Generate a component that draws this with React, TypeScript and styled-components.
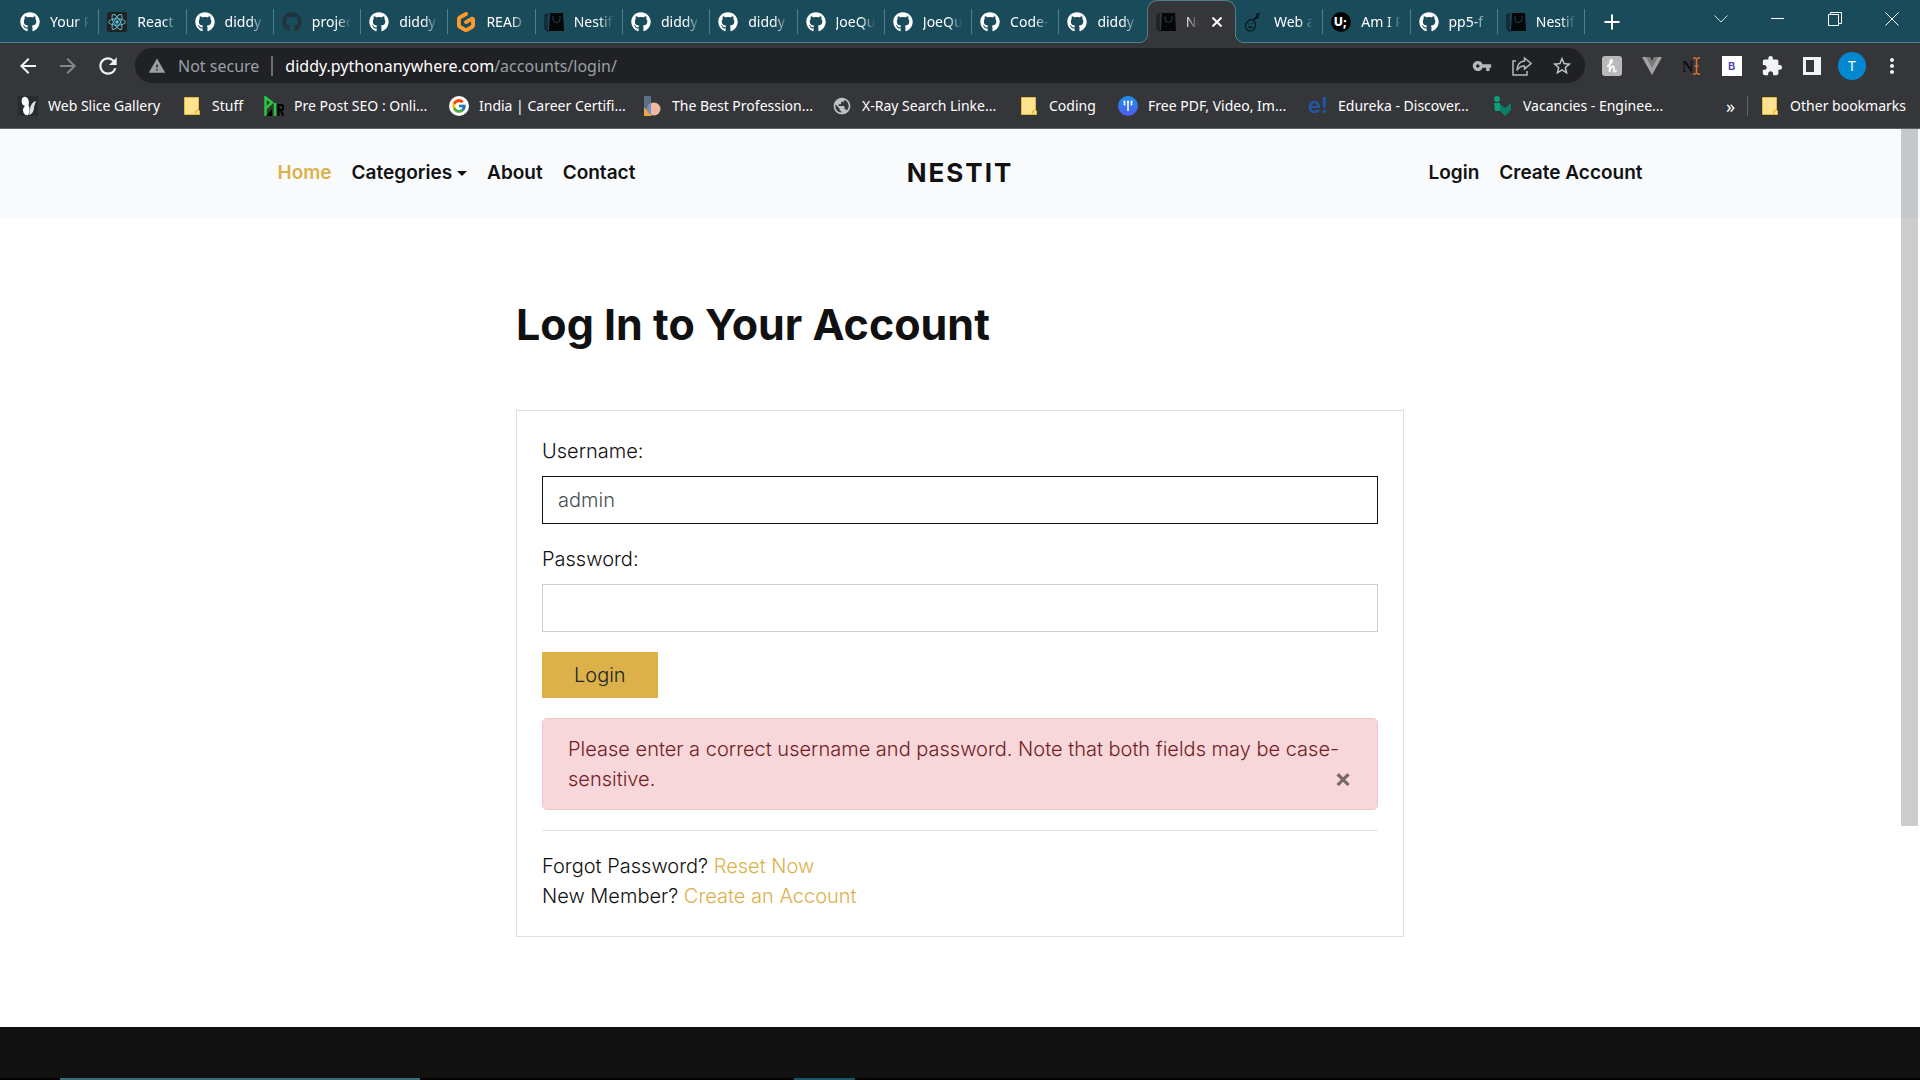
import React from 'react';
import styled, { createGlobalStyle, css } from 'styled-components';
import { FaGithub } from 'react-icons/fa';
import { FcGoogle } from 'react-icons/fc';
import { SiGitpod } from 'react-icons/si';
import {
  MdArrowBack,
  MdArrowForward,
  MdExtension,
  MdMoreVert,
  MdPublic,
  MdRefresh,
  MdStarBorder,
  MdVpnKey,
  MdWarning,
} from 'react-icons/md';

const color = {
  strip: '#1a4b5b',
  stripLine: '#4f7f8c',
  toolbar: '#35363a',
  omnibox: '#202124',
  muted: '#9aa0a6',
  gold: '#dcb14a',
  ink: '#111111',
};

const uiFont = '"Noto Sans", "Open Sans", sans-serif';
const siteFont = 'Inter, "Liberation Sans", sans-serif';

const GlobalStyle = createGlobalStyle`
  *, *::before, *::after { box-sizing: border-box; }
  body { margin: 0; background: #fff; }
  button { border: 0; padding: 0; background: none; color: inherit; font: inherit; cursor: pointer; }
  a { text-decoration: none; color: inherit; }
  svg { display: block; flex: none; }
`;

const Screen = styled.div`
  display: flex;
  flex-direction: column;
  min-height: 100vh;
`;

/* ---------- browser window ---------- */

const TabStrip = styled.div`
  display: flex;
  height: 43px;
  padding-left: 12px;
  background: linear-gradient(${color.stripLine}, ${color.stripLine}) bottom / 100% 1px no-repeat ${color.strip};
  color: #fff;
  font: 14px/20px ${uiFont};
`;

const TabList = styled.div`
  display: flex;
  flex: 0 1 1573px;
  min-width: 0;
`;

const activeTab = css`
  background: ${color.toolbar};
  border: 1px solid ${color.stripLine};
  border-bottom: 0;
  border-radius: 10px 10px 0 0;
  &::before,
  &::after {
    content: '';
    position: absolute;
    bottom: 0;
    width: 9px;
    height: 9px;
  }
  &::before {
    left: -9px;
    background: radial-gradient(circle at 0 0, transparent 8px, ${color.stripLine} 8px, ${color.stripLine} 9px, ${color.toolbar} 9px);
  }
  &::after {
    right: -9px;
    background: radial-gradient(circle at 100% 0, transparent 8px, ${color.stripLine} 8px, ${color.stripLine} 9px, ${color.toolbar} 9px);
  }
`;

const idleTab = css<{ $divided: boolean }>`
  background: linear-gradient(${color.stripLine}, ${color.stripLine}) right center / ${p => (p.$divided ? 1 : 0)}px 25px no-repeat;
`;

const Tab = styled.div<{ $active: boolean; $divided: boolean }>`
  position: relative;
  display: flex;
  flex: 1 1 0;
  align-items: center;
  gap: 10px;
  min-width: 0;
  padding: 0 10px 0 8px;
  ${p => (p.$active ? activeTab : idleTab)}
`;

const TabTitle = styled.span`
  flex: 1;
  min-width: 0;
  overflow: hidden;
  white-space: nowrap;
  mask-image: linear-gradient(to left, transparent, #000 14px);
`;

const TabClose = styled.button`
  display: grid;
  place-items: center;
  width: 16px;
  height: 20px;
`;

const NewTab = styled.button`
  display: grid;
  place-items: center;
  width: 54px;
`;

const WindowControls = styled.div`
  display: flex;
  height: 38px;
  margin-left: auto;
`;

const WindowButton = styled.button`
  display: grid;
  place-items: center;
  width: 57px;
`;

const Toolbar = styled.div`
  display: flex;
  align-items: center;
  height: 45px;
  padding: 0 8px;
  background: ${color.toolbar};
  color: #f1f3f4;
`;

const ToolButton = styled.button<{ $dim?: boolean }>`
  display: grid;
  place-items: center;
  width: 40px;
  height: 35px;
  color: ${p => (p.$dim ? '#85868a' : 'inherit')};
`;

const Omnibox = styled.div`
  display: flex;
  flex: 1;
  align-items: center;
  height: 35px;
  margin: 0 7px;
  padding: 0 3px 0 13px;
  border-radius: 18px;
  background: ${color.omnibox};
  color: ${color.muted};
  font: 16px/24px ${uiFont};
  white-space: nowrap;
`;

const Security = styled.button`
  display: flex;
  align-items: center;
  gap: 12px;
`;

const OmniDivider = styled.span`
  width: 2px;
  height: 20px;
  margin: 0 12px;
  background: #6d6f73;
`;

const Url = styled.span`
  flex: 1;
`;

const Host = styled.span`
  color: #fff;
`;

const Avatar = styled.span`
  display: grid;
  place-items: center;
  width: 28px;
  height: 28px;
  border-radius: 50%;
  background: #0288d1;
  color: #fff;
  font: 14px/28px ${uiFont};
`;

const BookmarksBar = styled.nav`
  display: flex;
  align-items: center;
  height: 41px;
  padding: 0 14px 4px 18px;
  border-bottom: 1px solid #5f6064;
  background: ${color.toolbar};
  color: #fff;
  font: 14px/20px ${uiFont};
  white-space: nowrap;
`;

const Bookmark = styled.a<{ $width?: number }>`
  display: flex;
  align-items: center;
  gap: 10px;
  ${p => p.$width && `width: ${p.$width}px;`}
`;

const MoreBookmarks = styled.button`
  margin-left: auto;
  padding-right: 12px;
  font-size: 18px;
`;

const BarDivider = styled.span`
  width: 1px;
  height: 20px;
  margin-right: 12px;
  background: #63656a;
`;

/* ---------- web page ---------- */

const Viewport = styled.div`
  position: relative;
  display: flex;
  flex: 1;
  flex-direction: column;
  color: ${color.ink};
  font: 300 20px/30px ${siteFont};
`;

const ScrollThumb = styled.div`
  position: absolute;
  top: 0;
  right: 2px;
  width: 17px;
  height: 697px;
  background: rgba(0, 0, 0, 0.2);
`;

const SiteHeader = styled.header`
  padding: 29px 0 30px;
  background: #f8fafc;
`;

const HeaderInner = styled.div`
  display: grid;
  grid-template-columns: 1fr auto 1fr;
  align-items: center;
  max-width: 1425px;
  margin: 0 auto;
  padding: 0 30px;
`;

const NavGroup = styled.nav<{ $end?: boolean }>`
  display: flex;
  gap: 20px;
  justify-content: ${p => (p.$end ? 'flex-end' : 'flex-start')};
`;

const NavLink = styled.a<{ $current?: boolean; $caret?: boolean }>`
  display: flex;
  align-items: center;
  gap: 5px;
  color: ${p => (p.$current ? color.gold : color.ink)};
  font-size: 19px;
  font-weight: 600;
  ${p =>
    p.$caret &&
    css`
      &::after {
        content: '';
        border: 5px solid transparent;
        border-top-color: currentColor;
        border-bottom: 0;
      }
    `}
`;

const Brand = styled.a`
  font-size: 26px;
  font-weight: 700;
  letter-spacing: 2px;
`;

const Main = styled.main`
  width: 100%;
  max-width: 888px;
  margin: 0 auto;
  padding: 77px 0 90px;
`;

const Title = styled.h1`
  margin: 0 0 57px;
  font-size: 43px;
  font-weight: 700;
  line-height: 58px;
`;

const Card = styled.section`
  padding: 25px;
  border: 1px solid #dfdfdf;
`;

const LoginForm = styled.form`
  display: flex;
  flex-direction: column;
  align-items: stretch;
  gap: 20px;
`;

const Field = styled.div`
  display: flex;
  flex-direction: column;
  gap: 10px;
`;

const TextInput = styled.input<{ $focused?: boolean }>`
  width: 100%;
  height: 48px;
  padding: 0 15px;
  border: 1px solid ${p => (p.$focused ? color.ink : '#ced0d8')};
  border-radius: 0;
  outline: none;
  background: #fff;
  color: #495057;
  font: inherit;
`;

const SubmitButton = styled.button`
  align-self: flex-start;
  height: 46px;
  padding: 0 32px;
  background: ${color.gold};
  color: #212529;
`;

const Alert = styled.div`
  padding: 15px 25px;
  border: 1px solid #f5c6cb;
  border-radius: 5px;
  background: #f7d7da;
  color: #721c24;
`;

const AlertClose = styled.button`
  float: right;
  height: 30px;
  color: #000;
  font-size: 26px;
  font-weight: 700;
  line-height: 28px;
  opacity: 0.5;
  text-shadow: 0 1px 0 #fff;
`;

const Rule = styled.hr`
  margin: 20px 0;
  border: 0;
  border-top: 1px solid #e3e3e3;
`;

const HelpLine = styled.p`
  margin: 0;
`;

const GoldLink = styled.a`
  color: ${color.gold};
`;

const SiteFooter = styled.footer`
  flex: 1;
  min-height: 51px;
  background: ${color.ink};
`;

const Taskbar = styled.div`
  display: flex;
  gap: 374px;
  height: 2px;
  padding-left: 60px;
  background: #000;
`;

const TaskItem = styled.span<{ $wide?: boolean }>`
  width: ${p => (p.$wide ? 360 : 61)}px;
  background: ${p => (p.$wide ? '#3d6c7a' : '#1b5568')};
`;

/* ---------- drawings ---------- */

const GitHub = () => <FaGithub size={20} />;
const DarkGitHub = () => <FaGithub size={20} color="#24323a" />;
const Gitpod = () => <SiGitpod size={20} color="#ff9a2e" />;

const ReactMark = () => (
  <svg width="20" height="20" viewBox="0 0 20 20">
    <rect width="20" height="20" rx="2" fill="#222" />
    <g fill="none" stroke="#5fc9e3" strokeWidth="0.9">
      <ellipse cx="10" cy="10" rx="8.4" ry="3.2" />
      <ellipse cx="10" cy="10" rx="8.4" ry="3.2" transform="rotate(60 10 10)" />
      <ellipse cx="10" cy="10" rx="8.4" ry="3.2" transform="rotate(120 10 10)" />
    </g>
    <circle cx="10" cy="10" r="1.7" fill="#5fc9e3" />
  </svg>
);

const Bag = () => (
  <svg width="20" height="20" viewBox="0 0 20 20">
    <path d="M6 1h13l1 18H5z" fill="#050607" />
    <path d="M4.500 1.500 1 3v14l2 2h2M3 3v15" fill="none" stroke="#0b1418" strokeWidth="1" />
    <path d="M9 4v3a3.500 3.500 0 0 0 7 0V4" fill="none" stroke="#22404b" strokeWidth="1" />
  </svg>
);

const Doodle = () => (
  <svg width="20" height="20" viewBox="0 0 20 20" fill="none" stroke="#06141a" strokeWidth="1.2">
    <path d="M9.500 8C6 6.500 1.500 10 1.500 14c0 3 2 5 4.500 5 3.500 0 5.500-3 5.500-6 0-2-.5-3.500-2-5zM9.500 8 16 1M12.500 1l1 4M11 7l4-2" />
    <path d="M4.500 14.500c.5 1.500 2.500 1.500 4 0M4.500 12h1M8 11.500h1" />
  </svg>
);

const UMark = () => (
  <svg width="20" height="20" viewBox="0 0 20 20">
    <circle cx="10" cy="10" r="10" fill="#000" />
    <text x="3" y="14" fill="#fff" fontFamily="Inter, sans-serif" fontSize="12" fontWeight="800">U;</text>
  </svg>
);

const WebSlice = () => (
  <svg width="20" height="20" viewBox="0 0 20 20">
    <rect width="20" height="20" fill="#292c2f" />
    <path d="M4 3c1-3 5-3 6.500 1 .5 2 .5 4 0 5 1.500 3 1.500 8-.5 10-2 1-5-1-5-5 0-2 1-3 2-4C4 9 3 6 4 3z" fill="#fff" />
    <path d="M18 5c-4 1-6 5-6 9l-1 5c4-1 5-5 5-8z" fill="#dfe1e3" />
  </svg>
);

const Folder = () => (
  <svg width="20" height="20" viewBox="0 0 20 20">
    <path d="M2.500 1.500h14V14l1 1v3.500h-15z" fill="#ffe38f" stroke="#e2b93f" />
    <path d="M13.500 18.500V15l1.500-1h1.500" fill="#f4c84e" stroke="#e2b93f" />
  </svg>
);

const PrePost = () => (
  <svg width="20" height="20" viewBox="0 0 20 20" fill="none">
    <path d="M1.500 20V1.500L8 6.500 1.500 12.500" stroke="#28c840" strokeWidth="2.500" />
    <path d="M2 20l6-7v7" fill="#000" />
    <path d="M11 7v13" stroke="#28c840" strokeWidth="2.500" />
    <path d="M14.500 20V9H17a2.500 2.500 0 0 1 0 5h-2M17 14l2 6" stroke="#000" strokeWidth="2" />
  </svg>
);

const Google = () => (
  <svg width="20" height="20" viewBox="0 0 20 20">
    <circle cx="10" cy="10" r="10" fill="#fff" />
    <FcGoogle x="2" y="2" width="16" height="16" size={16} />
  </svg>
);

const BestProfession = () => (
  <svg width="20" height="20" viewBox="0 0 20 20">
    <path d="M2 0h7v20H2z" fill="#5b7086" />
    <path d="M2 11l8 9H2z" fill="#f2a541" />
    <circle cx="12" cy="13" r="6.500" fill="#efb8a2" />
    <path d="M9 7.200a6.500 6.500 0 0 0 0 11.600z" fill="#6f94c4" />
  </svg>
);

const PdfMark = () => (
  <svg width="20" height="20" viewBox="0 0 20 20">
    <defs>
      <linearGradient id="pdf" x1="0" y1="0" x2="0" y2="1">
        <stop offset="0" stopColor="#1f8fe8" />
        <stop offset="1" stopColor="#4d5cf0" />
      </linearGradient>
    </defs>
    <circle cx="10" cy="10" r="10" fill="url(#pdf)" />
    <path d="M6.500 5.500v4M10 5.500V15M13.500 5.500v4M5.500 5.500h2M9 5.500h2M12.500 5.500h2" stroke="#fff" strokeWidth="1.500" />
  </svg>
);

const Edureka = () => (
  <svg width="20" height="20" viewBox="0 0 20 20">
    <text x="0" y="17" fill="#1f57a4" fontFamily="Inter, sans-serif" fontSize="22" fontWeight="600">e!</text>
  </svg>
);

const Vacancies = () => (
  <svg width="20" height="20" viewBox="0 0 20 20">
    <circle cx="4" cy="3" r="3" fill="#0f9d7a" />
    <path d="M1 7h6v8H2z" fill="#0f9d7a" />
    <path d="M7 8l5 4 6-5v7l-6 6-5-5z" fill="#0a7d62" />
  </svg>
);

const Chevron = () => (
  <svg width="14" height="14" viewBox="0 0 14 14" fill="none" stroke="#cfe0e5"><path d="M.5 3.500 7 10l6.500-6.500" /></svg>
);
const Minimize = () => (
  <svg width="14" height="14" viewBox="0 0 14 14" stroke="#fff"><path d="M0 6.500h13" /></svg>
);
const Restore = () => (
  <svg width="14" height="14" viewBox="0 0 14 14" fill="none" stroke="#fff"><path d="M.5 2.500h10v11H.5zM2.500 2.500v-2h11v11h-3" /></svg>
);
const CloseWindow = () => (
  <svg width="14" height="14" viewBox="0 0 14 14" stroke="#fff"><path d="M.5.5l13 13M13.500.5l-13 13" /></svg>
);
const CloseSmall = () => (
  <svg width="10" height="10" viewBox="0 0 10 10" stroke="#fff" strokeWidth="2"><path d="M.5.5l9 9M9.500.5l-9 9" /></svg>
);
const Plus = () => (
  <svg width="16" height="16" viewBox="0 0 16 16" stroke="#fff" strokeWidth="2"><path d="M8 .5v15M.5 8h15" /></svg>
);

const Share = () => (
  <svg width="20" height="20" viewBox="0 0 20 20" fill="none" stroke="#b4b7bb" strokeWidth="1.500">
    <path d="M4 5H1v14h14v-4" />
    <path d="M12.500 2l6.500 5.500-6.500 5.500v-3C9 10 6.500 11.500 5 14.500 5 9 8 5.500 12.500 5z" />
  </svg>
);
const Honey = () => (
  <svg width="20" height="20" viewBox="0 0 20 20">
    <rect width="20" height="20" rx="3" fill="#b9b9b9" />
    <path d="M5 10c4-1 6-5 4.500-6.200C8 3 7.500 8 7.500 16c.5-4 2.500-6 4-5.500 1.500.7-.5 5.500 1 5.500 1 0 1.500-1 2-2" fill="none" stroke="#fff" strokeWidth="1.600" />
  </svg>
);
const Vue = () => (
  <svg width="20" height="18" viewBox="0 0 20 18">
    <path d="M0 0h5l5 9 5-9h5L10 18z" fill="#a3a3a3" />
    <path d="M4 0h4l2 4 2-4h4l-6 11z" fill="#7c7c7c" />
  </svg>
);
const NameTool = () => (
  <svg width="20" height="20" viewBox="0 0 20 20">
    <text x="0" y="16" fill="#111" fontFamily="Liberation Serif, serif" fontSize="16" fontWeight="700">N</text>
    <path d="M11 2h2l1.500 1L16 2h2M14.500 3v14M11 18h2l1.500-1 1.500 1h2M12.500 10h4" fill="none" stroke="#e0702a" strokeWidth="1.500" />
  </svg>
);
const BMark = () => (
  <svg width="20" height="20" viewBox="0 0 20 20">
    <rect width="20" height="20" fill="#fff" />
    <text x="6" y="14" fill="#4540b5" fontFamily="Inter, sans-serif" fontSize="11" fontWeight="600">B</text>
  </svg>
);
const SidePanel = () => (
  <svg width="18" height="18" viewBox="0 0 18 18">
    <path d="M0 0h18v18H0zM3 3v12h8V3z" fill="#f1f3f4" fillRule="evenodd" />
  </svg>
);

const tabs: { title: string; Icon: React.ComponentType; active?: boolean }[] = [
  { title: 'Your R', Icon: GitHub },
  { title: 'React', Icon: ReactMark },
  { title: 'diddy', Icon: GitHub },
  { title: 'projec', Icon: DarkGitHub },
  { title: 'diddy', Icon: GitHub },
  { title: 'READ', Icon: Gitpod },
  { title: 'Nestif', Icon: Bag },
  { title: 'diddy', Icon: GitHub },
  { title: 'diddy', Icon: GitHub },
  { title: 'JoeQu', Icon: GitHub },
  { title: 'JoeQu', Icon: GitHub },
  { title: 'Code-', Icon: GitHub },
  { title: 'diddy', Icon: GitHub },
  { title: 'Ne', Icon: Bag, active: true },
  { title: 'Web a', Icon: Doodle },
  { title: 'Am I R', Icon: UMark },
  { title: 'pp5-f', Icon: GitHub },
  { title: 'Nestif', Icon: Bag },
];

const bookmarks: { title: string; Icon: React.ComponentType; width: number }[] = [
  { title: 'Web Slice Gallery', Icon: WebSlice, width: 164 },
  { title: 'Stuff', Icon: Folder, width: 82 },
  { title: 'Pre Post SEO : Onli...', Icon: PrePost, width: 185 },
  { title: 'India | Career Certifi...', Icon: Google, width: 193 },
  { title: 'The Best Profession...', Icon: BestProfession, width: 190 },
  { title: 'X-Ray Search Linke...', Icon: () => <MdPublic size={20} color="#bdc1c6" />, width: 187 },
  { title: 'Coding', Icon: Folder, width: 99 },
  { title: 'Free PDF, Video, Im...', Icon: PdfMark, width: 190 },
  { title: 'Edureka - Discover...', Icon: Edureka, width: 185 },
  { title: 'Vacancies - Enginee...', Icon: Vacancies, width: 185 },
];

const extensions: { name: string; Icon: React.ComponentType }[] = [
  { name: 'Honey', Icon: Honey },
  { name: 'Vue devtools', Icon: Vue },
  { name: 'Rename', Icon: NameTool },
  { name: 'Bootstrap', Icon: BMark },
  { name: 'Extensions', Icon: () => <MdExtension size={22} /> },
  { name: 'Side panel', Icon: SidePanel },
  { name: 'Profile', Icon: () => <Avatar>T</Avatar> },
  { name: 'Menu', Icon: () => <MdMoreVert size={24} /> },
];

function BrowserChrome() {
  return (
    <>
      <TabStrip>
        <TabList>
          {tabs.map(({ title, Icon, active }, i) => (
            <Tab key={i} $active={!!active} $divided={!tabs[i + 1]?.active}>
              <Icon />
              <TabTitle>{title}</TabTitle>
              {active && (
                <TabClose aria-label="Close tab"><CloseSmall /></TabClose>
              )}
            </Tab>
          ))}
        </TabList>
        <NewTab aria-label="New tab"><Plus /></NewTab>
        <WindowControls>
          <WindowButton aria-label="Search tabs"><Chevron /></WindowButton>
          <WindowButton aria-label="Minimize"><Minimize /></WindowButton>
          <WindowButton aria-label="Restore"><Restore /></WindowButton>
          <WindowButton aria-label="Close"><CloseWindow /></WindowButton>
        </WindowControls>
      </TabStrip>
      <Toolbar>
        <ToolButton aria-label="Back"><MdArrowBack size={24} /></ToolButton>
        <ToolButton aria-label="Forward" $dim><MdArrowForward size={24} /></ToolButton>
        <ToolButton aria-label="Reload"><MdRefresh size={26} /></ToolButton>
        <Omnibox>
          <Security><MdWarning size={18} />Not secure</Security>
          <OmniDivider />
          <Url><Host>diddy.pythonanywhere.com</Host>/accounts/login/</Url>
          <ToolButton aria-label="Passwords"><MdVpnKey size={20} color="#b4b7bb" /></ToolButton>
          <ToolButton aria-label="Share"><Share /></ToolButton>
          <ToolButton aria-label="Bookmark"><MdStarBorder size={22} color="#c4c7ca" /></ToolButton>
        </Omnibox>
        {extensions.map(({ name, Icon }) => (
          <ToolButton key={name} aria-label={name}><Icon /></ToolButton>
        ))}
      </Toolbar>
      <BookmarksBar aria-label="Bookmarks">
        {bookmarks.map(({ title, Icon, width }) => (
          <Bookmark key={title} href="#" $width={width}><Icon />{title}</Bookmark>
        ))}
        <MoreBookmarks aria-label="More bookmarks">»</MoreBookmarks>
        <BarDivider />
        <Bookmark href="#"><Folder />Other bookmarks</Bookmark>
      </BookmarksBar>
    </>
  );
}

function LoginPage() {
  return (
    <Viewport>
      <SiteHeader>
        <HeaderInner>
          <NavGroup aria-label="Main">
            <NavLink href="#" $current>Home</NavLink>
            <NavLink href="#" $caret>Categories</NavLink>
            <NavLink href="#">About</NavLink>
            <NavLink href="#">Contact</NavLink>
          </NavGroup>
          <Brand href="#">NESTIT</Brand>
          <NavGroup aria-label="Account" $end>
            <NavLink href="#">Login</NavLink>
            <NavLink href="#">Create Account</NavLink>
          </NavGroup>
        </HeaderInner>
      </SiteHeader>
      <Main>
        <Title>Log In to Your Account</Title>
        <Card>
          <LoginForm onSubmit={e => e.preventDefault()}>
            <Field>
              <label htmlFor="username">Username:</label>
              <TextInput id="username" type="text" defaultValue="admin" $focused />
            </Field>
            <Field>
              <label htmlFor="password">Password:</label>
              <TextInput id="password" type="password" />
            </Field>
            <SubmitButton type="submit">Login</SubmitButton>
            <Alert role="alert">
              Please enter a correct username and password. Note that both fields may be case-sensitive.
              <AlertClose type="button" aria-label="Close">×</AlertClose>
            </Alert>
          </LoginForm>
          <Rule />
          <HelpLine>Forgot Password? <GoldLink href="#">Reset Now</GoldLink></HelpLine>
          <HelpLine>New Member? <GoldLink href="#">Create an Account</GoldLink></HelpLine>
        </Card>
      </Main>
      <SiteFooter />
      <ScrollThumb />
    </Viewport>
  );
}

export default function App() {
  return (
    <Screen>
      <GlobalStyle />
      <BrowserChrome />
      <LoginPage />
      <Taskbar>
        <TaskItem $wide />
        <TaskItem />
      </Taskbar>
    </Screen>
  );
}
